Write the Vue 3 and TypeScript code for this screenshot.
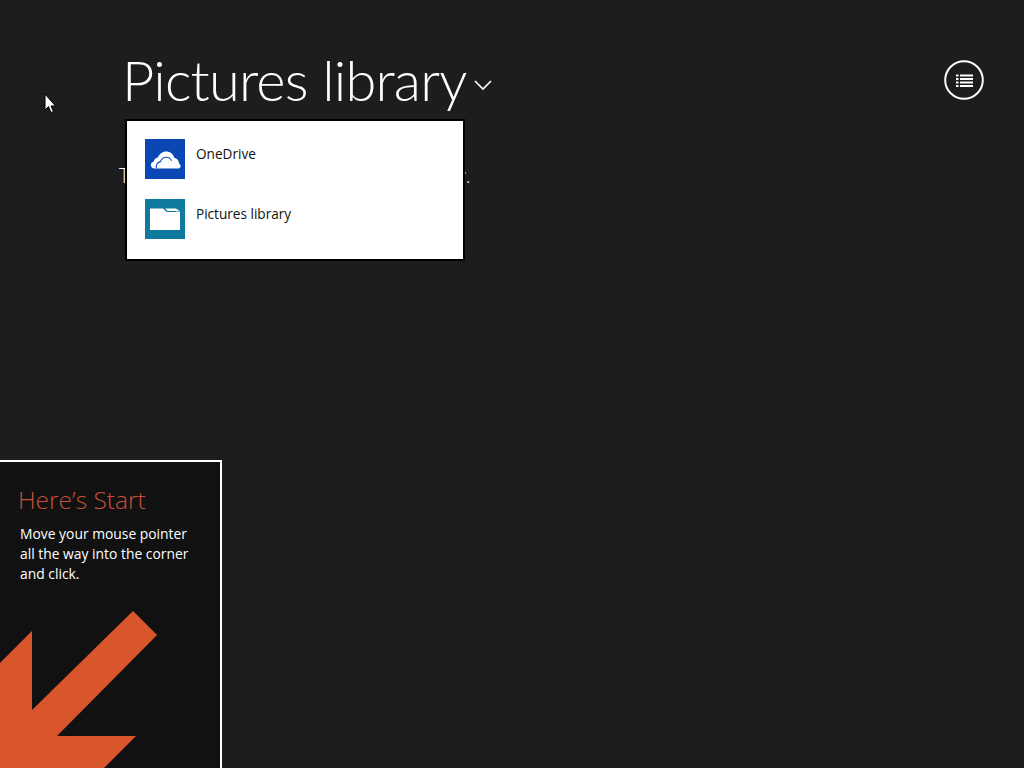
<script setup lang="ts">
const locations = [
  { name: 'OneDrive', tile: 'tile-blue', icon: 'cloud' },
  { name: 'Pictures library', tile: 'tile-teal', icon: 'folder' },
]
</script>

<template>
  <div class="page">
    <header class="header">
      <h1 class="title">Pictures library</h1>
      <svg class="chevron" width="18" height="12" viewBox="0 0 18 12">
        <path d="M1 2 L9 10 L17 2" fill="none" stroke="#fff" stroke-width="1.6" />
      </svg>
      <button class="list-btn" aria-label="Select">
        <svg width="40" height="40" viewBox="0 0 40 40">
          <circle cx="20" cy="20" r="18.800" fill="none" stroke="#fff" stroke-width="2" />
          <path d="M12 14.500h2.500v2H12zM12 18h2.500v2H12zM12 21.500h2.500v2H12zM12 25h2.500v2H12z" fill="#fff" />
          <path d="M16 14.500h13v2H16zM16 18h13v2H16zM16 21.500h13v2H16zM16 25h13v2H16z" fill="#fff" />
        </svg>
      </button>
    </header>

    <p class="empty">There aren't any photos in your library.</p>

    <!-- location flyout -->
    <div class="flyout">
      <div v-for="item in locations" :key="item.name" class="flyout-row">
        <div class="tile" :class="item.tile">
          <svg v-if="item.icon === 'cloud'" width="40" height="40" viewBox="0 0 40 40">
            <path d="M9.500 29.500c-2.200 0-3.700-1.500-3.700-3.400 0-1.800 1.200-3.200 3-3.500.4-2.300 2-3.800 4-4.100 1.400-3.500 4.400-6.100 8.300-6.100 4.100 0 7.200 2.600 8.200 6.300 2.900.5 4.700 3 4.700 5.800 1 .6 1.600 1.500 1.600 2.400 0 1.500-1 2.600-2.600 2.600z" fill="#fff" />
            <path d="M11.500 29c-.9-3 1-6 4-6.400.9-2.700 3.100-4.300 5.800-4.300 2.400 0 4.400 1.400 5.300 3.500" fill="none" stroke="#0a47b4" stroke-width="1.100" />
          </svg>
          <svg v-else width="40" height="40" viewBox="0 0 40 40">
            <path d="M5 9.500h13.500l3 3H35v18.500H5z" fill="#fff" />
            <path d="M20 9.500h11l3.500 2.500H22.500z" fill="#fff" />
            <path d="M18.500 9.500l3.500 3h9" fill="none" stroke="#0f7a9c" stroke-width="1" />
          </svg>
        </div>
        <span class="flyout-label">{{ item.name }}</span>
      </div>
    </div>

    <!-- start screen hint -->
    <aside class="hint">
      <h2 class="hint-title">Here’s Start</h2>
      <p class="hint-text">Move your mouse pointer<br>all the way into the corner<br>and click.</p>
      <svg class="hint-arrow" width="222" height="172" viewBox="0 0 222 172">
        <path d="M133 7 L157 31 L57 132 L136 132 L100 168 L-2 168 L-2 61 L32 27 L32 106 Z" fill="#d9552b" />
      </svg>
    </aside>

    <!-- mouse pointer -->
    <svg class="cursor" width="12" height="21" viewBox="0 0 12 21">
      <path d="M1 1 V17 L4.500 13.500 L7 19.500 L9.500 18.500 L7 13 H11.500 Z" fill="#fff" stroke="#000" stroke-width="1" />
    </svg>
  </div>
</template>

<style scoped>
.page {
  position: relative;
  width: 1024px;
  height: 768px;
  overflow: hidden;
  background: #1d1d1d;
  color: #fff;
  font-family: "Open Sans", "Liberation Sans", sans-serif;
}

.header {
  display: flex;
  align-items: center;
  height: 120px;
  padding: 40px 40px 0 124px;
  box-sizing: border-box;
}

.title {
  margin: 0 0 0 -2px;
  font-family: Lato, "Open Sans", sans-serif;
  font-size: 56px;
  font-weight: 300;
  line-height: 80px;
  letter-spacing: -0.8px;
  white-space: nowrap;
}

.chevron {
  margin: 10px 0 0 8px;
}

.list-btn {
  margin-left: auto;
  padding: 0;
  width: 40px;
  height: 40px;
  background: none;
  border: 0;
}

.empty {
  margin: 44px 0 0 119px;
  font-size: 20px;
  line-height: 24px;
  font-weight: 300;
  letter-spacing: 0.1px;
}

.flyout {
  position: absolute;
  left: 125px;
  top: 119px;
  width: 340px;
  height: 142px;
  box-sizing: border-box;
  background: #fff;
  border: 2px solid #000;
  padding: 18px;
  display: flex;
  flex-direction: column;
  gap: 20px;
}

.flyout-row {
  display: flex;
  gap: 11px;
  height: 40px;
}

.tile {
  width: 40px;
  height: 40px;
}

.tile svg {
  display: block;
}

.tile-blue {
  background: #0a47b4;
}

.tile-teal {
  background: #0f7a9c;
}

.flyout-label {
  color: #111;
  font-size: 13.600px;
  line-height: 30px;
}

.hint {
  position: absolute;
  left: -2px;
  top: 460px;
  width: 224px;
  height: 320px;
  box-sizing: border-box;
  background: #111;
  border: 2px solid #fff;
  padding: 22px 0 0 20px;
}

.hint-title {
  margin: 0 0 0 -2px;
  color: #c9503a;
  font-size: 24.500px;
  font-weight: 300;
  line-height: 32px;
}

.hint-text {
  margin: 8px 0 0 0;
  font-size: 13.870px;
  line-height: 20px;
}

.hint-arrow {
  position: absolute;
  left: 0;
  top: 142px;
}

.cursor {
  position: absolute;
  left: 44px;
  top: 93px;
}
</style>

<style>
body {
  background: #1d1d1d;
}
</style>
